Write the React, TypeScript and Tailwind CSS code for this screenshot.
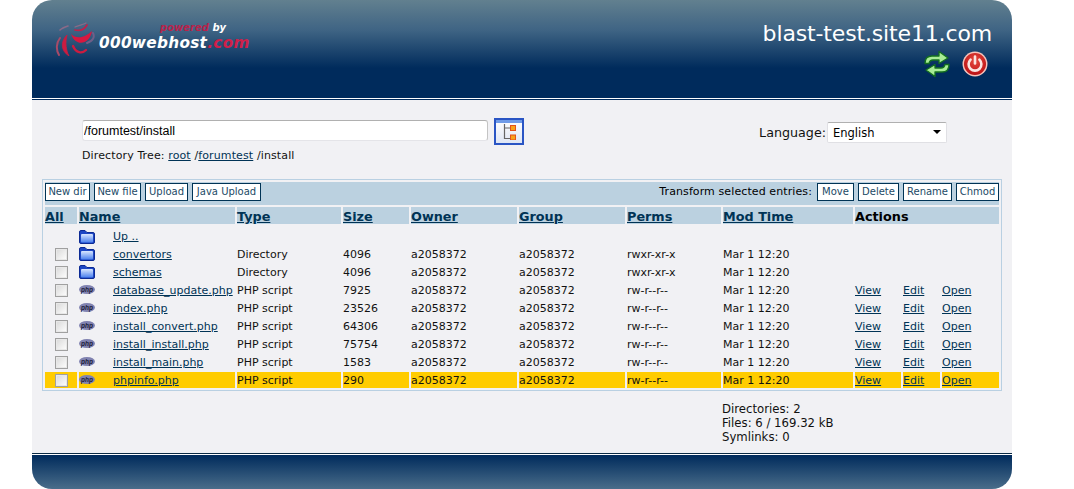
import React from 'react';

type Entry = {
  name: string;
  kind: 'Directory' | 'PHP script';
  size: string;
  perms: string;
};

const ENTRIES: Entry[] = [
  { name: 'convertors', kind: 'Directory', size: '4096', perms: 'rwxr-xr-x' },
  { name: 'schemas', kind: 'Directory', size: '4096', perms: 'rwxr-xr-x' },
  { name: 'database_update.php', kind: 'PHP script', size: '7925', perms: 'rw-r--r--' },
  { name: 'index.php', kind: 'PHP script', size: '23526', perms: 'rw-r--r--' },
  { name: 'install_convert.php', kind: 'PHP script', size: '64306', perms: 'rw-r--r--' },
  { name: 'install_install.php', kind: 'PHP script', size: '75754', perms: 'rw-r--r--' },
  { name: 'install_main.php', kind: 'PHP script', size: '1583', perms: 'rw-r--r--' },
  { name: 'phpinfo.php', kind: 'PHP script', size: '290', perms: 'rw-r--r--' },
];

const FolderIcon = () => (
  <svg width="16" height="14" viewBox="0 0 16 14" className="block">
    <defs>
      <linearGradient id="folderFill" x1="0" y1="0" x2="0" y2="1">
        <stop offset="0" stopColor="#d8e6ff" />
        <stop offset="1" stopColor="#4a80ee" />
      </linearGradient>
    </defs>
    <path d="M0.5 2 Q0.5 0.5 2 0.5 H6 L8 2.5 H14 Q15.5 2.5 15.5 4 V12 Q15.5 13.5 14 13.5 H2 Q0.5 13.5 0.5 12 Z" fill="#1c46c4" stroke="#0c2a94" />
    <rect x="2" y="4" width="12" height="8.5" rx="1" fill="url(#folderFill)" />
  </svg>
);

const PhpIcon = () => (
  <svg width="16" height="9" viewBox="0 0 16 9" className="block">
    <ellipse cx="8" cy="4.5" rx="8" ry="4.5" fill="#8082b0" />
    <text x="8" y="6.5" textAnchor="middle" fontSize="6.5" fontWeight="700" fill="#1c1c38" fontFamily="'Liberation Sans', sans-serif" fontStyle="italic">
      php
    </text>
  </svg>
);

const Swirl = () => (
  <svg width="42" height="34" viewBox="0 0 42 34" className="block">
    <path d="M18 12 C24 18 33 15 39 9 C37 22 23 26 18 12 Z" fill="#d8173f" />
    <path d="M14 13 C7 20 8 29 16 34 C13 28 12 21 14 13 Z" fill="#cc1c40" stroke="#cc1c40" strokeWidth="0.8" />
    <g fill="none" strokeLinecap="round">
      <path d="M40 11 C42 15 40 19 34 21" stroke="#6f5f88" strokeWidth="2" />
      <path d="M7 16 C3 21 3 28 6 33" stroke="#a84a68" strokeWidth="2" />
      <path d="M20 24 C23 31 29 32 33 28" stroke="#cc1c40" strokeWidth="2.4" />
      <path d="M22 8 C26 9 31 8 34 3" stroke="#c0204a" strokeWidth="1.8" />
      <path d="M22 5 C26 3 30 3 33 1" stroke="#8a6a88" strokeWidth="1.2" />
      <path d="M7 8 C9 6 12 5 15 4" stroke="#8a6a88" strokeWidth="1.6" />
    </g>
  </svg>
);

const RefreshIcon = () => (
  <svg width="28" height="28" viewBox="0 0 28 28" className="block">
    <g fill="#a8ec96" stroke="#14701f" strokeWidth="1.3" strokeLinejoin="round">
      <path d="M2 13.5 C2 8.5 4.5 6 9 6 H16 V1.5 L25 8 L16 13.5 V10 H10 C7.5 10 6.5 11 6 13.5 Z" />
      <path d="M26 14.5 C26 19.5 23.5 22 19 22 H12 V26.5 L3 20 L12 14.5 V18 H18 C20.5 18 21.5 17 22 14.5 Z" />
    </g>
  </svg>
);

const PowerIcon = () => (
  <svg width="26" height="26" viewBox="0 0 26 26" className="block">
    <defs>
      <radialGradient id="powerFill" cx="50%" cy="35%" r="70%">
        <stop offset="0" stopColor="#e64a3f" />
        <stop offset="1" stopColor="#b80c10" />
      </radialGradient>
    </defs>
    <circle cx="13" cy="13" r="12.5" fill="#f6c4bc" />
    <circle cx="13" cy="13" r="11" fill="url(#powerFill)" />
    <path d="M8.6 8.6 A6.4 6.4 0 1 0 17.4 8.6" fill="none" stroke="#fbe4e0" strokeWidth="2.6" strokeLinecap="round" />
    <path d="M13 5.5 V12.5" stroke="#fbe4e0" strokeWidth="2.6" strokeLinecap="round" />
  </svg>
);

const TreeIcon = () => (
  <svg width="13" height="17" viewBox="0 0 13 17" className="block">
    <path d="M1.5 1 V15.5 H7 M1.5 5 H7" fill="none" stroke="#666" strokeWidth="1.2" />
    <rect x="7.5" y="2.5" width="5" height="5" fill="#f7a21b" stroke="#e2521c" />
    <rect x="7.5" y="12" width="5" height="5" fill="#f7a21b" stroke="#e2521c" />
  </svg>
);

const ToolButton = ({ label, width }: { label: string; width: string }) => (
  <button className={`h-[18px] border border-[#003355] bg-white p-0 text-[10px] leading-none text-[#224a66] ${width}`}>
    {label}
  </button>
);

const HeadLink = ({ children }: { children: React.ReactNode }) => (
  <a className="font-bold text-[#003355] underline">{children}</a>
);

const App: React.FC = () => {
  const cell = 'h-4 p-0 pt-px align-middle';
  const headCell = 'h-[17px] p-0 align-bottom text-[12.8px] leading-[15px]';

  return (
    <div className="ml-8 w-[980px] font-['DejaVu_Sans',Verdana,sans-serif] text-[11px] leading-[14px] text-[#111]">
      <header className="flex h-[98px] justify-between rounded-t-[20px] bg-[linear-gradient(#62808f_0px,#3f6484_30px,#002b5c_68px,#002b5c_98px)]">
        <div className="flex items-start pl-[21px] pt-[22px]">
          <Swirl />
          <div className="ml-[4px] italic">
            <div className="h-[12px] pl-[61px] text-[10px] font-bold leading-[12px] text-white">
              <span className="text-[#b8224a]">powered</span> by
            </div>
            <div className="text-[15.3px] font-bold leading-[18px] tracking-[0.3px] text-white">
              000webhost<span className="text-[#d0204a]">.com</span>
            </div>
          </div>
        </div>
        <div className="flex flex-col items-end pr-5 pt-[19px]">
          <div className="text-[22px] leading-[30px] tracking-[-0.15px] text-white">blast-test.site11.com</div>
          <div className="mr-[4px] mt-[1px] flex items-center gap-[11px]">
            <RefreshIcon />
            <PowerIcon />
          </div>
        </div>
      </header>
      <div className="h-px bg-white" />
      <div className="h-px bg-[#002b5c]" />

      <main className="h-[353px] bg-[#f1f1f4] pt-[18px]">
        <div className="flex items-start pl-[50px] pr-[65px]">
          <div>
            <div className="mt-[2px] flex items-start">
              <input
                readOnly
                value="/forumtest/install"
                className="h-[21px] w-[406px] rounded-[3px] border border-[#e4e4e8] border-t-[#b0b0b0] border-r-[#c4c4c4] bg-white px-[1px] font-['Liberation_Sans',sans-serif] text-[12.5px] text-black"
              />
              <button className="-mt-[2px] ml-[6px] flex h-[27px] w-[30px] items-center justify-center border-2 border-[#2a55c4] bg-[linear-gradient(#ffffff,#dfe6f4)] shadow-[inset_0_3px_0_#6f9be8]">
                <TreeIcon />
              </button>
            </div>
            <div className="mt-[4px] tracking-[0.12px]">
              Directory Tree: <a className="text-[#003355] underline">root</a> /
              <a className="text-[#003355] underline">forumtest</a> /install
            </div>
          </div>
          <div className="ml-auto mt-[4px] flex items-center">
            <span className="mr-[1px] text-[12.7px]">Language:</span>
            <div className="relative">
              <select className="block h-[21px] w-[120px] appearance-none rounded-[2px] border border-[#e0e0e4] border-t-[#b0b0b0] bg-white pl-[5px] font-['DejaVu_Sans',sans-serif] text-[11.5px] text-black">
                <option>English</option>
              </select>
              <span className="absolute right-[6px] top-[8px] h-0 w-0 border-x-[4px] border-t-[4px] border-x-transparent border-t-black" />
            </div>
          </div>
        </div>

        <table className="ml-[10px] mt-[16px] w-[960px] table-fixed border-separate border-spacing-[2px] border border-[#b9d0e2]">
          <colgroup>
            <col className="w-[32px]" />
            <col className="w-[156px]" />
            <col className="w-[104px]" />
            <col className="w-[66px]" />
            <col className="w-[106px]" />
            <col className="w-[106px]" />
            <col className="w-[94px]" />
            <col className="w-[130px]" />
            <col className="w-[46px]" />
            <col className="w-[37px]" />
            <col className="w-[57px]" />
          </colgroup>
          <thead>
            <tr>
              <td colSpan={11} className="h-[23px] bg-[#bbd1e0] p-0 align-top">
                <div className="flex items-center gap-[4px] pt-[1px]">
                  <ToolButton label="New dir" width="w-[45px]" />
                  <ToolButton label="New file" width="w-[47px]" />
                  <ToolButton label="Upload" width="w-[43px]" />
                  <ToolButton label="Java Upload" width="w-[69px]" />
                  <span className="ml-auto mr-[1px] tracking-[0.1px] text-black">Transform selected entries:</span>
                  <ToolButton label="Move" width="w-[37px]" />
                  <ToolButton label="Delete" width="w-[41px]" />
                  <ToolButton label="Rename" width="w-[49px]" />
                  <ToolButton label="Chmod" width="w-[43px]" />
                </div>
              </td>
            </tr>
            <tr className="bg-[#bbd1e0] text-left">
              <th className={headCell}><HeadLink>All</HeadLink></th>
              <th className={headCell}><HeadLink>Name</HeadLink></th>
              <th className={headCell}><HeadLink>Type</HeadLink></th>
              <th className={headCell}><HeadLink>Size</HeadLink></th>
              <th className={headCell}><HeadLink>Owner</HeadLink></th>
              <th className={headCell}><HeadLink>Group</HeadLink></th>
              <th className={headCell}><HeadLink>Perms</HeadLink></th>
              <th className={headCell}><HeadLink>Mod Time</HeadLink></th>
              <th colSpan={3} className={`${headCell} text-black`}>Actions</th>
            </tr>
          </thead>
          <tbody>
            <tr>
              <td className="h-[18px] p-0" />
              <td className="h-[18px] p-0 pt-[3px] align-middle">
                <div className="flex items-center">
                  <span className="w-[34px]"><FolderIcon /></span>
                  <a className="text-[#003355] underline">Up ..</a>
                </div>
              </td>
              <td colSpan={9} className="p-0" />
            </tr>
            {ENTRIES.map((entry) => {
              const isDir = entry.kind === 'Directory';
              const selected = entry.name === 'phpinfo.php';
              const rowClass = selected ? 'bg-[#ffcc00]' : '';
              return (
                <tr key={entry.name} className={rowClass}>
                  <td className="h-4 p-0 align-middle">
                    <div className="flex pl-[10px]">
                      <input
                        type="checkbox"
                        className="block size-[13px] appearance-none border border-[#a0a0a0] bg-[linear-gradient(135deg,#d8d8d8,#ffffff)] shadow-[inset_0_0_0_1px_#e8e8e8]"
                      />
                    </div>
                  </td>
                  <td className={cell}>
                    <div className="flex items-center">
                      <span className="w-[34px] shrink-0 -translate-y-[1px]">
                        {isDir ? <FolderIcon /> : <PhpIcon />}
                      </span>
                      <a className="whitespace-nowrap text-[#003355] underline">{entry.name}</a>
                    </div>
                  </td>
                  <td className={cell}>{entry.kind}</td>
                  <td className={cell}>{entry.size}</td>
                  <td className={cell}>a2058372</td>
                  <td className={cell}>a2058372</td>
                  <td className={cell}>{entry.perms}</td>
                  <td className={cell}>Mar 1 12:20</td>
                  {isDir ? (
                    <td colSpan={3} className={cell} />
                  ) : (
                    <>
                      <td className={cell}><a className="text-[#003355] underline">View</a></td>
                      <td className={cell}><a className="text-[#003355] underline">Edit</a></td>
                      <td className={cell}><a className="text-[#003355] underline">Open</a></td>
                    </>
                  )}
                </tr>
              );
            })}
          </tbody>
        </table>

        <div className="ml-[690px] mt-[11px] text-[11.7px]">
          <div>Directories: 2</div>
          <div>Files: 6 / 169.32 kB</div>
          <div>Symlinks: 0</div>
        </div>
      </main>

      <div className="h-px bg-[#0a2a44]" />
      <div className="h-px bg-white" />
      <footer className="h-[34px] rounded-b-[20px] bg-[linear-gradient(#002b5c_0px,#4a6d8a_34px)]" />
    </div>
  );
};

export default App;
